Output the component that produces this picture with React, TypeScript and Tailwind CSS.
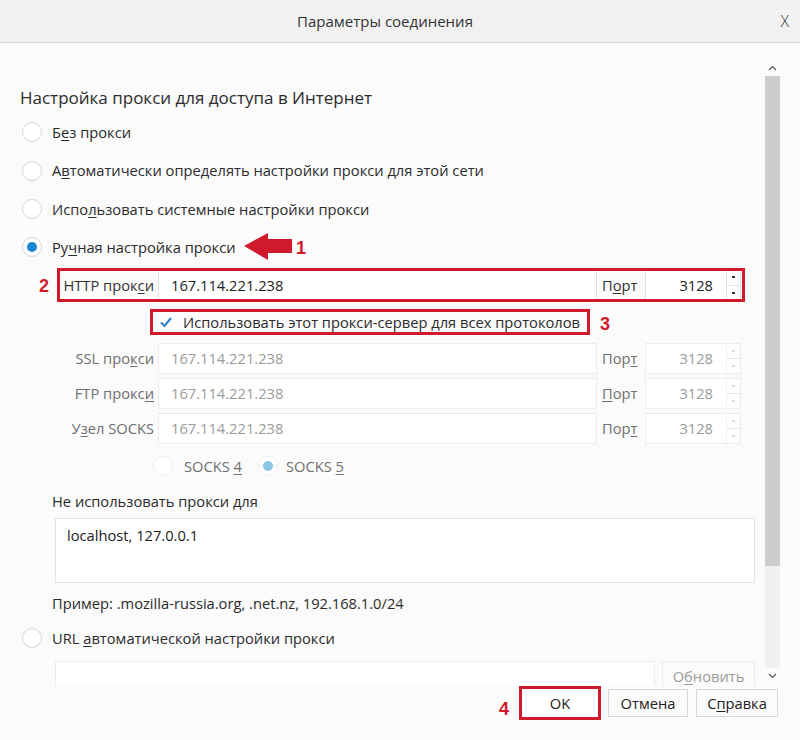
import React from "react";

const RED = "#d0192b";

function U({ children }: { children: React.ReactNode }) {
  return <span className="underline underline-offset-2 decoration-1">{children}</span>;
}

function Radio({ checked, disabled }: { checked?: boolean; disabled?: boolean }) {
  return (
    <div
      className={`w-[20px] h-[20px] rounded-full border flex items-center justify-center shrink-0 bg-white ${
        disabled ? "border-[#eeeeee]" : "border-[#d6d6d6]"
      }`}
    >
      {checked && (
        <div className={`w-[10px] h-[10px] rounded-full ${disabled ? "bg-[#8cc4e4]" : "bg-[#1d86d0]"}`} />
      )}
    </div>
  );
}

function Spinner({ disabled }: { disabled?: boolean }) {
  const c = disabled ? "bg-[#dcdcdc]" : "bg-[#333]";
  return (
    <div className={`w-[14px] flex flex-col border-l ${disabled ? "border-[#f0f0f0]" : "border-[#e2e2e2]"}`}>
      <div className="flex-1 flex items-center justify-center border-b border-[#e8e8e8]">
        <div className={`w-[3px] h-[2px] ${c}`} />
      </div>
      <div className="flex-1 flex items-center justify-center">
        <div className={`w-[3px] h-[2px] ${c}`} />
      </div>
    </div>
  );
}

function ProxyRow({
  label,
  port,
  disabled,
  height,
}: {
  label: React.ReactNode;
  port: React.ReactNode;
  disabled?: boolean;
  height: string;
}) {
  const text = disabled ? "text-[#9a9a9a]" : "text-[#222]";
  const lab = disabled ? "text-[#6f6f6f]" : "text-[#333]";
  const border = disabled ? "border-[#ececec]" : "border-[#e2e2e2]";
  return (
    <div className={`ml-[37px] flex items-stretch ${height}`}>
      <div className={`w-[101px] flex items-center justify-end pr-[4px] whitespace-nowrap ${lab}`}>{label}</div>
      <div className={`w-[439px] border ${border} bg-white flex items-center pl-[12px] ${text}`}>
        167.114.221.238
      </div>
      <div className={`w-[48px] flex items-center pl-[5px] ${lab}`}>{port}</div>
      <div className={`w-[96px] border ${border} bg-white flex`}>
        <div className={`flex-1 flex items-center justify-end pr-[13px] ${text}`}>3128</div>
        <Spinner disabled={disabled} />
      </div>
    </div>
  );
}

function Num({ n, className }: { n: string; className: string }) {
  return (
    <span
      className={`absolute font-['Liberation_Sans',sans-serif] font-bold text-[18px] leading-none text-[#d0192b] ${className}`}
    >
      {n}
    </span>
  );
}

export default function App() {
  return (
    <div className="w-[800px] h-[740px] bg-[#fbfbfb] flex flex-col font-['Open_Sans',sans-serif] text-[14.7px] text-[#2b2b2b] overflow-hidden">
      {/* Title bar */}
      <div className="h-[43px] shrink-0 bg-[#f1f1f1] border-b border-[#d4d4d4] grid grid-cols-[1fr_auto_1fr] items-center">
        <div />
        <span className="text-[15px] text-[#333] mr-[30px]">Параметры соединения</span>
        <div className="flex justify-end pr-[11px] text-[16px] text-[#444] font-light">X</div>
      </div>

      {/* Scrollable body */}
      <div className="h-[643px] shrink-0 flex">
        <div className="flex-1 overflow-hidden pl-[20px] pr-[10px] pt-[42px]">
          <h2 className="text-[17px] leading-[26px] text-[#2b2b2b]">Настройка прокси для доступа в Интернет</h2>

          <div className="mt-[2px] flex flex-col">
            <div className="h-[38px] flex items-center gap-[10px] pl-[2px]">
              <Radio />
              <span>
                Б<U>е</U>з прокси
              </span>
            </div>
            <div className="h-[39px] flex items-center gap-[10px] pl-[2px]">
              <Radio />
              <span>
                А<U>в</U>томатически определять настройки прокси для этой сети
              </span>
            </div>
            <div className="h-[38px] flex items-center gap-[10px] pl-[2px]">
              <Radio />
              <span>
                Испо<U>л</U>ьзовать системные настройки прокси
              </span>
            </div>
            <div className="h-[38px] flex items-center gap-[10px] pl-[2px] relative">
              <Radio checked />
              <span>
                Ру<U>ч</U>ная настройка прокси
              </span>
              <svg className="absolute left-[223px] top-[4px]" width="50" height="30" viewBox="0 0 50 30">
                <polygon points="1,14 25,1 25,7 49,7 49,21 25,21 25,28" fill={RED} />
              </svg>
              <Num n="1" className="left-[276px] top-[11px]" />
            </div>
          </div>

          {/* HTTP row */}
          <div className="relative mt-[2px]">
            <ProxyRow
              height="h-[34px]"
              label={
                <span>
                  HTTP прок<U>с</U>и
                </span>
              }
              port={
                <span>
                  П<U>о</U>рт
                </span>
              }
            />
            <div className="absolute left-[37px] top-0 w-[688px] h-[34px] border-[3px] border-[#d0192b] pointer-events-none" />
            <Num n="2" className="left-[19px] top-[9px]" />
          </div>

          {/* Checkbox */}
          <div className="relative mt-[7px] h-[26px] ml-[130px] w-[440px] border-[3px] border-[#d0192b] flex items-center pl-[6px] gap-[10px] whitespace-nowrap">
            <svg width="14" height="12" viewBox="0 0 14 12">
              <path d="M2 6.5 L5.5 10 L12 2" fill="none" stroke="#2a7fc4" strokeWidth="2" />
            </svg>
            <span className="text-[#2b2b2b]">Использовать этот прокси-сервер для всех протоколов</span>
            <Num n="3" className="left-[447px] top-[3px]" />
          </div>

          <div className="mt-[8px] flex flex-col gap-[4px]">
            <ProxyRow
              disabled
              height="h-[31px]"
              label={
                <span>
                  SSL про<U>к</U>си
                </span>
              }
              port={
                <span>
                  Пор<U>т</U>
                </span>
              }
            />
            <ProxyRow
              disabled
              height="h-[31px]"
              label={
                <span>
                  FTP прокс<U>и</U>
                </span>
              }
              port={
                <span>
                  <U>П</U>орт
                </span>
              }
            />
            <ProxyRow
              disabled
              height="h-[31px]"
              label={
                <span>
                  У<U>з</U>ел SOCKS
                </span>
              }
              port={
                <span>
                  Пор<U>т</U>
                </span>
              }
            />
          </div>

          {/* SOCKS version */}
          <div className="mt-[8px] h-[28px] ml-[133px] flex items-center text-[#6f6f6f]">
            <Radio disabled />
            <span className="ml-[11px]">
              SOCKS <U>4</U>
            </span>
            <div className="ml-[16px]">
              <Radio checked disabled />
            </div>
            <span className="ml-[8px]">
              SOCKS <U>5</U>
            </span>
          </div>

          <div className="mt-[11px] ml-[32px] leading-[20px]">Не использовать прокси для</div>
          <div className="mt-[7px] ml-[35px] w-[700px] h-[65px] border border-[#e2e2e2] bg-white px-[11px] pt-[5px] text-[#222]">
            localhost, 127.0.0.1
          </div>
          <div className="mt-[10px] ml-[32px] leading-[20px]">Пример: .mozilla-russia.org, .net.nz, 192.168.1.0/24</div>

          <div className="mt-[6px] h-[38px] flex items-center gap-[10px] pl-[2px]">
            <Radio />
            <span>
              URL <U>а</U>втоматической настройки прокси
            </span>
          </div>
          <div className="mt-[4px] ml-[35px] flex gap-[7px]">
            <div className="w-[600px] h-[25px] border border-b-0 border-[#ececec] bg-white" />
            <div className="w-[93px] h-[25px] border border-b-0 border-[#ececec] bg-[#fbfbfb] flex items-end justify-center text-[#9a9a9a] leading-[20px]">
              <span>
                О<U>б</U>новить
              </span>
            </div>
          </div>
        </div>

        {/* Scrollbar */}
        <div className="w-[15px] mr-[20px] pt-[17px] pb-[2px] flex flex-col">
          <div className="h-[16px] flex items-center justify-center">
            <svg width="9" height="6" viewBox="0 0 9 6">
              <path d="M1 5 L4.5 1.5 L8 5" fill="none" stroke="#555" strokeWidth="1.2" />
            </svg>
          </div>
          <div className="flex-1 flex flex-col bg-[#f0f0f0]">
            <div className="h-[490px] bg-[#cdcdcd]" />
          </div>
          <div className="h-[16px] flex items-center justify-center">
            <svg width="9" height="6" viewBox="0 0 9 6">
              <path d="M1 1 L4.5 4.5 L8 1" fill="none" stroke="#555" strokeWidth="1.2" />
            </svg>
          </div>
        </div>
      </div>

      {/* Footer */}
      <div className="flex-1 flex justify-end items-start pr-[22px]">
        <div className="relative w-[82px] h-[34px] border-[3px] border-[#d0192b] flex items-center justify-center bg-white">
          <span className="text-[#222]">OK</span>
          <Num n="4" className="-left-[23px] top-[11px]" />
        </div>
        <button className="ml-[7px] mt-[3px] w-[80px] h-[28px] border border-[#d8d8d8] bg-[#fbfbfb] text-[#222]">Отмена</button>
        <button className="ml-[8px] mt-[3px] w-[82px] h-[28px] border border-[#d8d8d8] bg-[#fbfbfb] text-[#222]">
          С<U>п</U>равка
        </button>
      </div>
    </div>
  );
}
